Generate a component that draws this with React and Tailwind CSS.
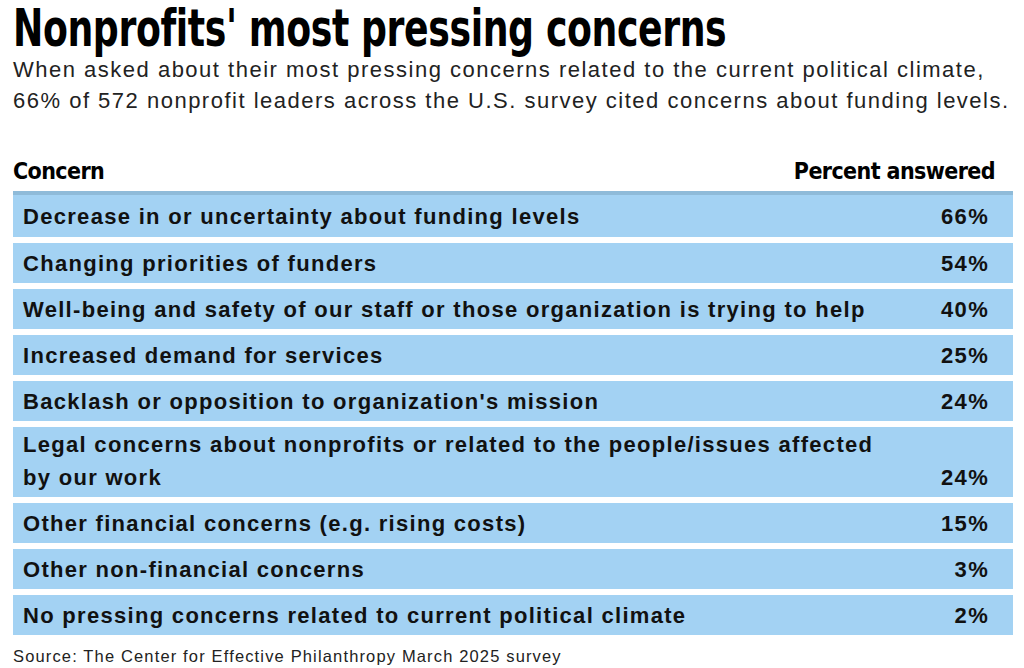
import React from "react";

const rows = [
  { label: "Decrease in or uncertainty about funding levels", pct: "66%" },
  { label: "Changing priorities of funders", pct: "54%" },
  { label: "Well-being and safety of our staff or those organization is trying to help", pct: "40%" },
  { label: "Increased demand for services", pct: "25%" },
  { label: "Backlash or opposition to organization's mission", pct: "24%" },
  { label: "Legal concerns about nonprofits or related to the people/issues affected by our work", pct: "24%", tall: true },
  { label: "Other financial concerns (e.g. rising costs)", pct: "15%" },
  { label: "Other non-financial concerns", pct: "3%" },
  { label: "No pressing concerns related to current political climate", pct: "2%" },
];

const condensed = {
  fontFamily: '"DejaVu Sans Condensed", "Liberation Sans Narrow", "Roboto", sans-serif',
  fontStretch: "condensed",
};

const App = () => {
  return (
    <div className="w-[1024px] h-[668px] bg-white text-black pl-[13px] pr-[11px] overflow-hidden font-['Liberation_Sans',Arial,sans-serif]">
      {/* headline font is a heavy condensed face, squeeze it to fit */}
      <h1
        className="inline-block whitespace-nowrap origin-left scale-x-[0.79] text-[51px] leading-[54px] font-bold pt-[2px] tracking-[-0.5px]"
        style={condensed}
      >
        Nonprofits' most pressing concerns
      </h1>
      <p className="-mt-[2px] whitespace-nowrap text-[22px] leading-[31px] tracking-[1.5px] text-[#222]">
        When asked about their most pressing concerns related to the current political climate,
        <br />
        66% of 572 nonprofit leaders across the U.S. survey cited concerns about funding levels.
      </p>

      <div
        className="flex justify-between items-end mt-[40px] pr-[18px] text-[23px] leading-[30px] font-bold tracking-[-0.6px]"
        style={condensed}
      >
        <span>Concern</span>
        <span>Percent answered</span>
      </div>

      <div className="mt-[5px] flex flex-col gap-[6px]">
        {rows.map((r, i) => (
          <div
            key={i}
            className={
              "bg-[#a3d2f3] flex justify-between pl-[10px] pr-[24px] text-[22px] font-bold tracking-[1.3px] text-[#111] " +
              (i === 0 ? "border-t-4 border-[#8fbbd9] h-[46px] items-center " : "") +
              (r.tall ? "h-[70px] items-end pb-[3px] leading-[33px] " : "") +
              (i !== 0 && !r.tall ? "h-[40px] items-center " : "")
            }
          >
            <span className={r.tall ? "w-[870px]" : ""}>{r.label}</span>
            <span>{r.pct}</span>
          </div>
        ))}
      </div>

      <p className="mt-[10px] text-[16.5px] leading-[22px] tracking-[1.15px] text-[#222]">
        Source: The Center for Effective Philanthropy March 2025 survey
      </p>
    </div>
  );
};

export default App;
